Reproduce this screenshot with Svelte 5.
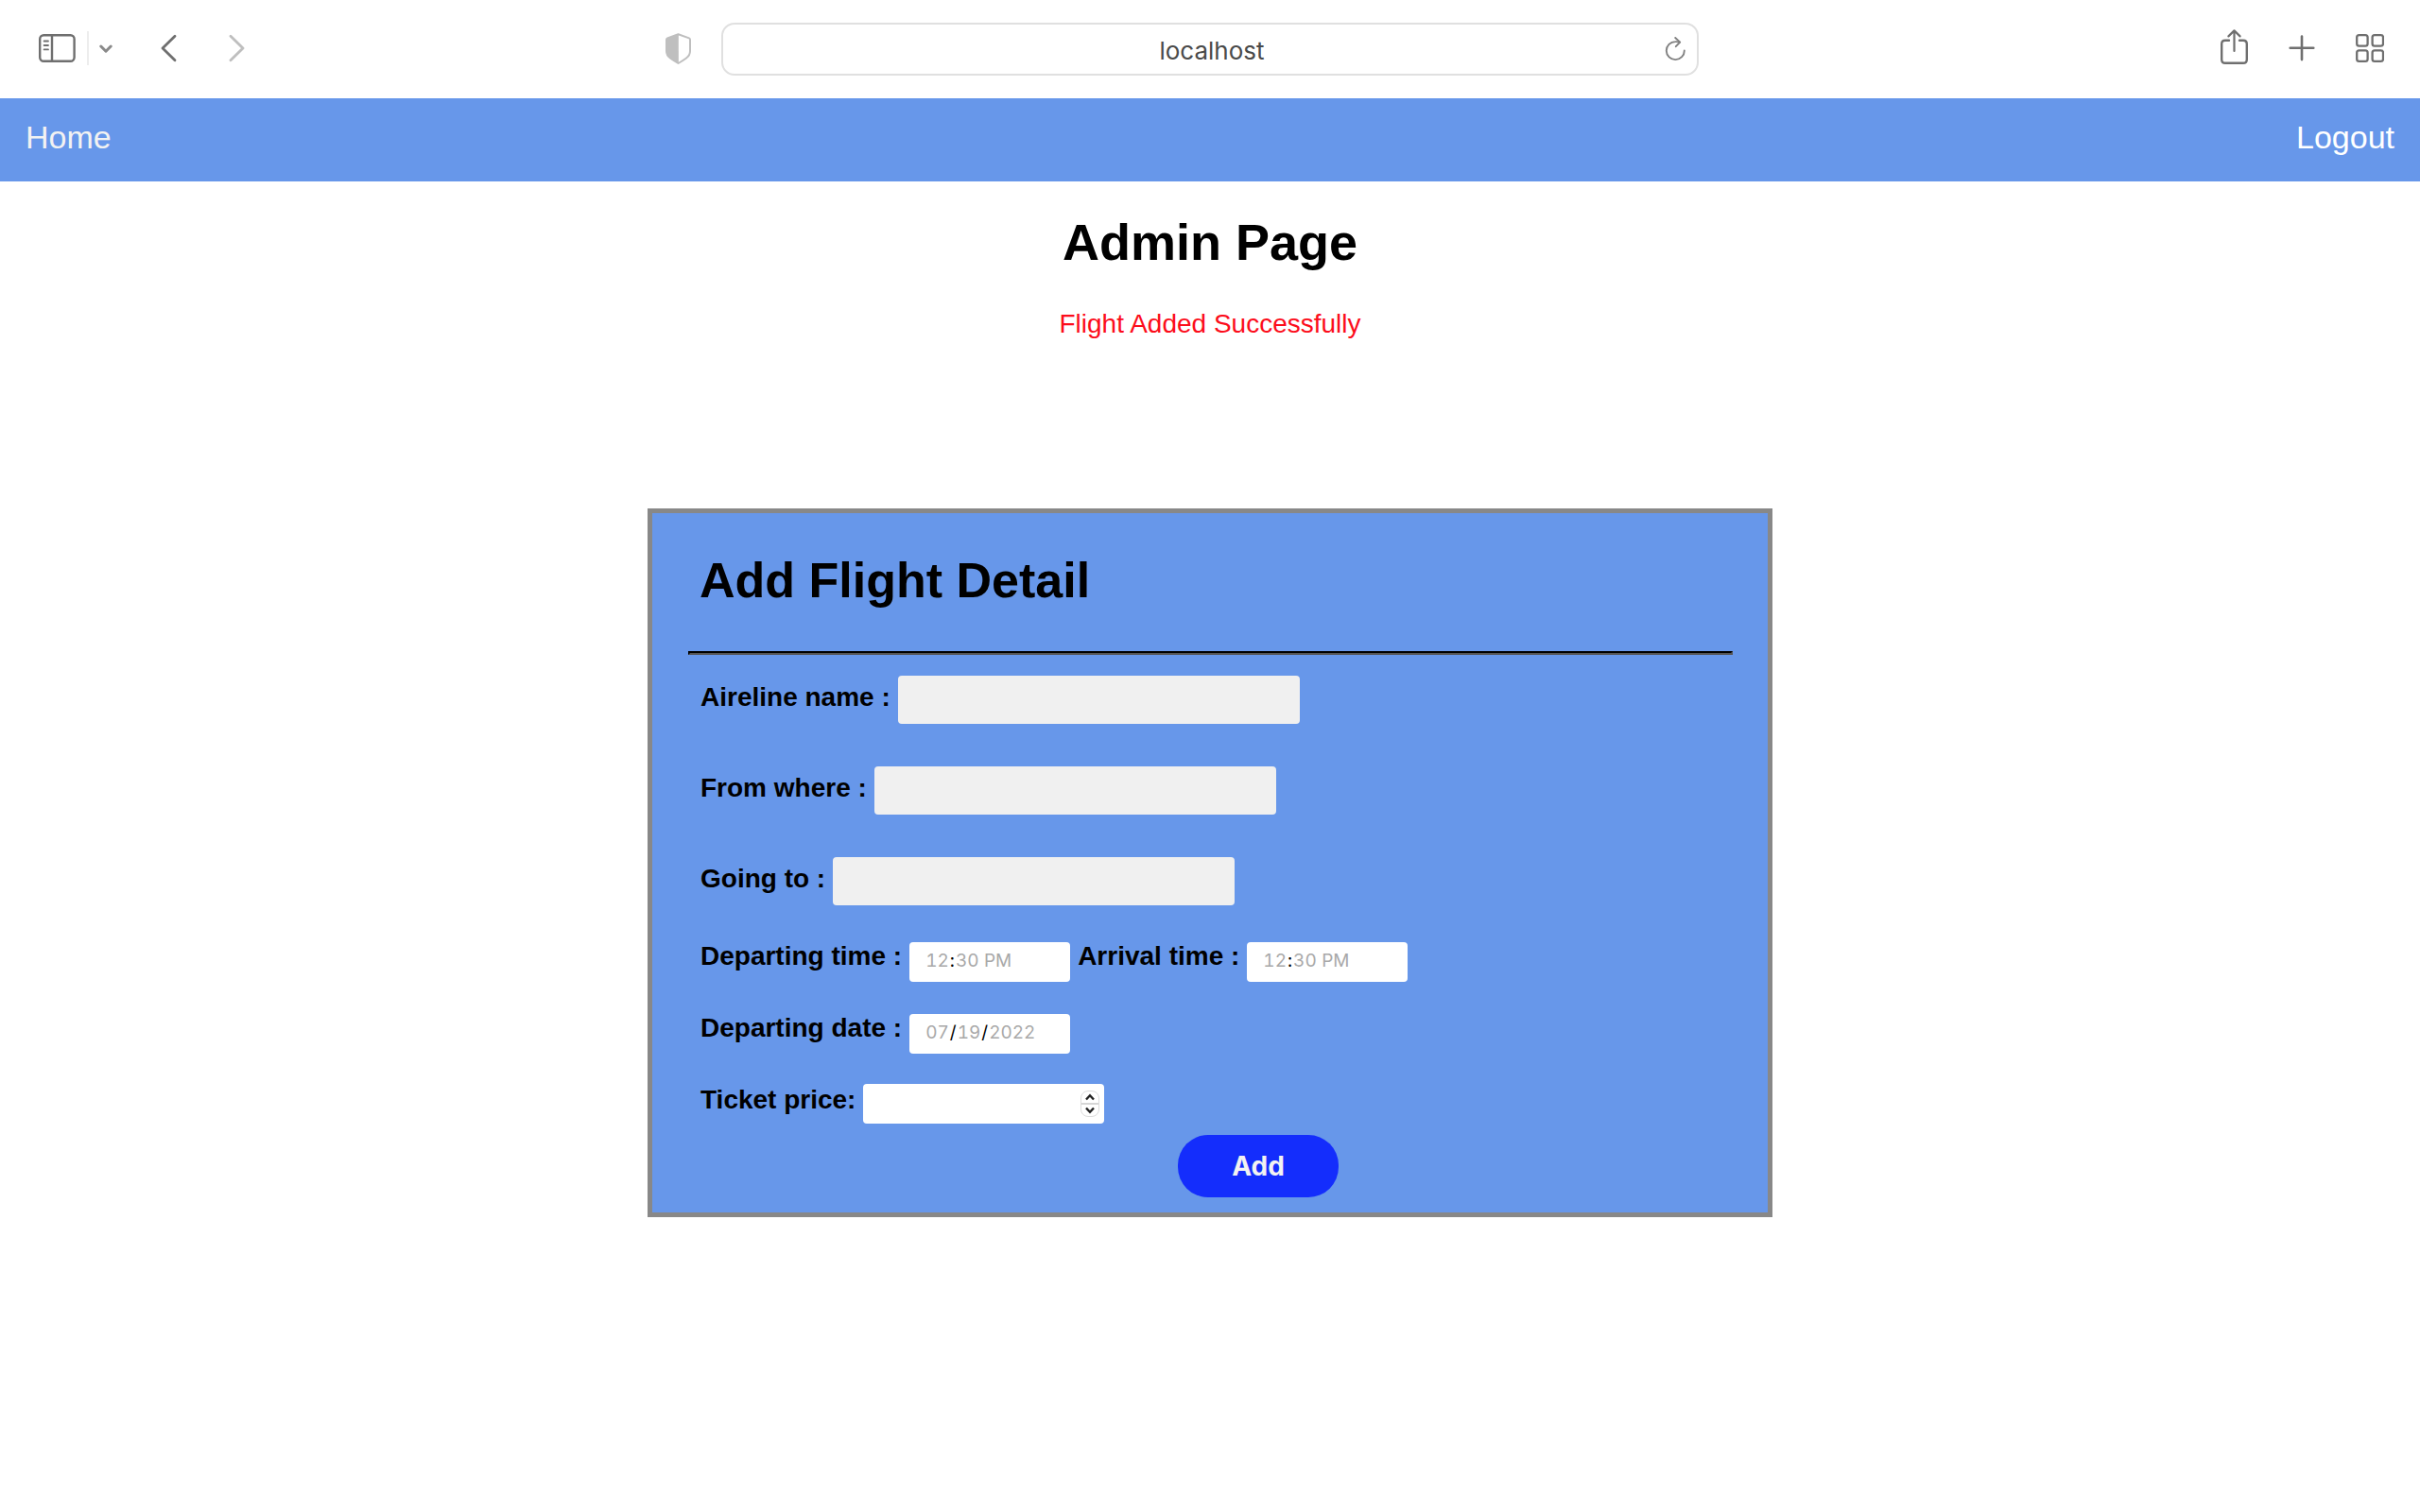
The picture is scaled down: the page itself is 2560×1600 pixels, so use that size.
<script>
  let address = $state('localhost');
  let airline = $state('');
  let origin = $state('');
  let destination = $state('');
  let departing = $state('12:30');
  let arrival = $state('12:30');
  let date = $state('2022-07-19');
  let price = $state(null);

  function step(amount) {
    price = Math.max(0, (Number(price) || 0) + amount);
  }
</script>

<header class="toolbar">
  <div class="group left">
    <button type="button" aria-label="Sidebar">
      <svg width="39" height="42" viewBox="0 0 39 42" stroke-width="2.4">
        <rect x="1.2" y="7.2" width="36.4" height="27.6" rx="4" />
        <path d="M14 7V35" />
        <path d="M5.6 13.5H10M5.6 18H10M5.6 22.4H10" stroke-width="1.8" stroke-linecap="round" />
      </svg>
    </button>
    <span class="divider"></span>
    <button type="button" class="soft menu" aria-label="Tab groups">
      <svg width="14" height="42" viewBox="0 0 14 42" stroke-width="3" stroke-linecap="round" stroke-linejoin="round">
        <path d="M1.8 19L7 24.2L12.2 19" />
      </svg>
    </button>
    <button type="button" class="back" aria-label="Back">
      <svg width="17" height="42" viewBox="0 0 17 42" stroke-width="2.8" stroke-linecap="round" stroke-linejoin="round">
        <path d="M15 8.2L2 21L15 33.8" />
      </svg>
    </button>
    <button type="button" class="faint forward" aria-label="Forward">
      <svg width="17" height="42" viewBox="0 0 17 42" stroke-width="2.8" stroke-linecap="round" stroke-linejoin="round">
        <path d="M2 8.2L15 21L2 33.8" />
      </svg>
    </button>
    <button type="button" class="faint shield" aria-label="Privacy report">
      <svg width="27" height="42" viewBox="0 0 27 42" stroke-width="2">
        <path d="M13.5 6.2L25 10.4Q26 10.8 26 12V24Q26 28.5 22 31.5Q18 34.4 13.5 37Q9 34.4 5 31.5Q1 28.5 1 24V12Q1 10.8 2 10.4Z" stroke-linejoin="round" />
        <path d="M13.8 6.2L2 10.4Q1 10.8 1 12V24Q1 28.5 5 31.5Q9 34.4 13.8 37Z" fill="currentColor" stroke="none" />
      </svg>
    </button>
  </div>

  <div class="address">
    <input type="text" aria-label="Address" bind:value={address} />
    <button type="button" class="reload" aria-label="Reload">
      <svg width="24" height="42" viewBox="0 0 24 42" stroke-width="1.9" stroke-linecap="round" stroke-linejoin="round">
        <path d="M20.8 22.4A9.5 9.5 0 1 1 11.3 13.1Q13.6 13 16 13.6" />
        <path d="M11.2 9L16.2 13.6L11.8 18.2" />
      </svg>
    </button>
  </div>

  <div class="group right">
    <button type="button" aria-label="Share">
      <svg width="29" height="42" viewBox="0 0 29 42" stroke-width="2.4" stroke-linecap="round" stroke-linejoin="round">
        <path d="M9 12.8H5Q1.2 12.8 1.2 16.6V33Q1.2 36.8 5 36.8H24Q27.8 36.8 27.8 33V16.6Q27.8 12.8 24 12.8H20" />
        <path d="M14.5 24V3M8.4 8.4L14.5 2.4L20.6 8.4" stroke-width="2.2" />
      </svg>
    </button>
    <button type="button" aria-label="New tab">
      <svg width="28" height="42" viewBox="0 0 28 42" stroke-width="2.6" stroke-linecap="round">
        <path d="M14 8.5V33.1M1.7 20.8H26.3" />
      </svg>
    </button>
    <button type="button" aria-label="Tab overview">
      <svg width="30" height="42" viewBox="0 0 30 42" stroke-width="2.3">
        <rect x="1.2" y="7.2" width="11.4" height="11.4" rx="2.4" />
        <rect x="17.6" y="7.2" width="11.4" height="11.4" rx="2.4" />
        <rect x="1.2" y="23.4" width="11.4" height="11.4" rx="2.4" />
        <rect x="17.6" y="23.4" width="11.4" height="11.4" rx="2.4" />
      </svg>
    </button>
  </div>
</header>

<nav>
  <a class="home" href="#home">Home</a>
  <a href="#logout">Logout</a>
</nav>

<main>
  <h1>Admin Page</h1>
  <p class="message" role="status">Flight Added Successfully</p>

  <form onsubmit={(event) => event.preventDefault()}>
    <h2>Add Flight Detail</h2>
    <hr />
    <div class="rows tall">
      <div class="row">
        <label for="airline">Aireline name :</label>
        <input id="airline" type="text" bind:value={airline} />
      </div>
      <div class="row">
        <label for="origin">From where :</label>
        <input id="origin" type="text" bind:value={origin} />
      </div>
      <div class="row">
        <label for="destination">Going to :</label>
        <input id="destination" type="text" bind:value={destination} />
      </div>
    </div>
    <div class="rows short">
      <div class="row">
        <label for="departing">Departing time :</label>
        <input id="departing" type="time" bind:value={departing} />
        <label for="arrival">Arrival time :</label>
        <input id="arrival" type="time" bind:value={arrival} />
      </div>
      <div class="row">
        <label for="date">Departing date :</label>
        <input id="date" type="date" bind:value={date} />
      </div>
      <div class="row">
        <label for="price">Ticket price:</label>
        <div class="price">
          <input id="price" type="number" min="0" bind:value={price} />
          <div class="stepper">
            <button type="button" aria-label="Increase price" onclick={() => step(1)}>
              <svg width="12" height="8" viewBox="0 0 12 8" stroke-width="2.4"><path d="M2 6.5L6 2.2L10 6.5" /></svg>
            </button>
            <button type="button" aria-label="Decrease price" onclick={() => step(-1)}>
              <svg width="12" height="8" viewBox="0 0 12 8" stroke-width="2.4"><path d="M2 1.5L6 5.8L10 1.5" /></svg>
            </button>
          </div>
        </div>
      </div>
    </div>
    <div class="actions">
      <button type="submit" class="add">Add</button>
    </div>
  </form>
</main>

<style>
  :global(body) {
    margin: 0;
    background: #fff;
    font-family: 'Liberation Sans', Arial, sans-serif;
    color: #000;
  }

  button {
    display: flex;
    padding: 0;
    border: 0;
    background: none;
    color: inherit;
    font: inherit;
    cursor: pointer;
  }

  input {
    box-sizing: border-box;
    min-width: 0;
    margin: 0;
    border: 0;
    outline: 0;
    font-family: Inter, sans-serif;
  }

  svg {
    display: block;
    fill: none;
    stroke: currentColor;
  }

  .toolbar {
    display: grid;
    grid-template-columns: 1fr minmax(0, 1034px) 1fr;
    padding: 24px 0;
    color: #6f6f6f;
  }

  .group {
    display: flex;
    align-items: center;
    padding-bottom: 2px;
  }

  .left {
    padding-left: 41px;
    padding-right: 32px;
  }

  .right {
    justify-content: flex-end;
    gap: 43px;
    padding-right: 38px;
  }

  .divider {
    width: 2px;
    height: 36px;
    margin: 0 11px 0 12px;
    background: #ededed;
  }

  .soft {
    color: #8a8a8a;
  }

  .faint {
    color: #bfbfbf;
  }

  .back {
    margin-left: 51px;
  }

  .forward {
    margin-left: 55px;
  }

  .shield {
    margin-left: auto;
  }

  .address {
    display: flex;
    align-items: center;
    box-sizing: border-box;
    height: 56px;
    padding: 0 10px 0 38px;
    border: 2px solid #e0e0e0;
    border-radius: 14px;
  }

  .address input {
    flex: 1;
    height: 42px;
    padding: 2px 0 0;
    background: none;
    color: #4a4a4a;
    font-size: 26px;
    text-align: center;
  }

  .reload {
    color: #808080;
  }

  nav {
    display: flex;
    justify-content: space-between;
    padding: 21px 27px 27px;
    background: #6797ea;
    font-size: 34px;
    line-height: 40px;
  }

  nav a {
    color: #fff;
    text-decoration: none;
  }

  nav .home {
    color: #f2f2f2;
  }

  main {
    display: flex;
    flex-direction: column;
    align-items: center;
    padding: 33px 0;
  }

  h1 {
    margin: 0;
    font-size: 54px;
    line-height: 62px;
  }

  .message {
    margin: 40px 0 179px;
    color: #fc0d1b;
    font-size: 28px;
    line-height: 32px;
  }

  form {
    box-sizing: border-box;
    width: 90%;
    max-width: 1190px;
    padding: 41px 37px 16px 38px;
    border: 5px solid #888;
    background: #6797ea;
  }

  h2 {
    margin: 0 0 45px 12px;
    font-size: 52px;
    line-height: 60px;
  }

  hr {
    height: 0;
    margin: 0 0 22px;
    border: 2px solid;
    border-color: #000 #555 #555 #000;
  }

  .rows {
    display: flex;
    flex-direction: column;
    padding-left: 13px;
  }

  .row {
    display: flex;
    align-items: flex-start;
    gap: 8px;
  }

  label {
    font-size: 28px;
    font-weight: bold;
    line-height: 32px;
  }

  .tall {
    gap: 45px;
    margin-bottom: 39px;
  }

  .tall label {
    padding-top: 7px;
  }

  .tall input {
    width: 425px;
    height: 51px;
    padding: 0 16px;
    border-radius: 4px;
    background: #f0f0f0;
    font-size: 20px;
  }

  .short {
    gap: 34px;
    margin-bottom: 12px;
  }

  .short label {
    line-height: 30px;
  }

  .short .row > input,
  .price {
    width: 170px;
    height: 42px;
    border-radius: 4px;
    background: #fff;
    font-size: 19px;
  }

  .short .row > input {
    padding: 0 0 3px 16px;
    font-variant-numeric: tabular-nums;
  }

  input::-webkit-calendar-picker-indicator {
    display: none;
  }

  input::-webkit-datetime-edit-hour-field,
  input::-webkit-datetime-edit-minute-field,
  input::-webkit-datetime-edit-ampm-field,
  input::-webkit-datetime-edit-month-field,
  input::-webkit-datetime-edit-day-field,
  input::-webkit-datetime-edit-year-field {
    color: #a9a9a9;
  }

  .short .price {
    display: flex;
    align-items: center;
    box-sizing: border-box;
    width: 255px;
    margin-top: -2px;
    padding-right: 5px;
  }

  .price input {
    flex: 1;
    height: 42px;
    padding: 0 16px;
    background: none;
    font-size: 19px;
    appearance: textfield;
  }

  .price input::-webkit-inner-spin-button {
    display: none;
  }

  .stepper {
    display: flex;
    flex-direction: column;
    box-sizing: border-box;
    width: 20px;
    height: 28px;
    border: 1px solid #dcdcdc;
    border-radius: 8px;
    overflow: hidden;
    color: #222;
  }

  .stepper button {
    flex: 1;
    align-items: center;
    justify-content: center;
  }

  .stepper button:first-child {
    border-bottom: 2px solid #d6d6d6;
  }

  .actions {
    display: flex;
    justify-content: center;
    padding-left: 101px;
  }

  .add {
    align-items: center;
    justify-content: center;
    width: 170px;
    height: 66px;
    border-radius: 32px;
    background: #142dfc;
    color: #f2f2f2;
    font-family: Inter, sans-serif;
    font-size: 28px;
    font-weight: bold;
  }
</style>
